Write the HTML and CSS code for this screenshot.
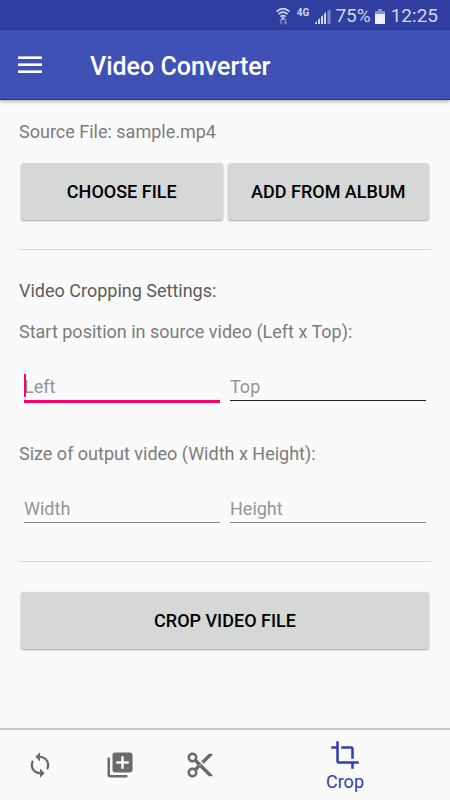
FILE: index.html
```html
<!DOCTYPE html>
<html lang="en">
<head>
<meta charset="utf-8">
<meta name="viewport" content="width=device-width, initial-scale=1">
<title>Video Converter</title>
<link rel="stylesheet" href="styles.css">
</head>
<body>
<div class="status">
  <svg width="14" height="18" viewBox="0 0 14 18" fill="none" stroke="#d3d7f2" stroke-width="1.6" aria-hidden="true">
    <path d="M.6 4.6Q7-1.4 13.4 4.6M2.5 7.2Q7 3 11.5 7.2M4.4 9.7Q7 7.4 9.6 9.7"/>
    <path d="M7 9.800l1.800 1.600L7 13l-1.800-1.600z" fill="#d3d7f2" stroke="none"/>
    <path d="M3 14l2-2.400L7 14H5.700v3.400H4.300V14zM7.400 15h1.300v-3.400h1.400V15h1.300l-2 2.400z" fill="#7d87cc" stroke="none"/>
  </svg>
  <span class="network">4G</span>
  <svg width="16" height="15" viewBox="0 0 16 15" fill="#d3d7f2" aria-hidden="true">
    <path d="M0 15v-1l2-2v3zM3 15v-4l2-2v6zM6 15V8l2-2v9zM9 15V5l2-2v12z"/>
    <path d="M12.500 15V2L15.500 0v15z" fill="#7d87cc"/>
  </svg>
  <span class="percent">75%</span>
  <svg width="10" height="15" viewBox="0 0 10 15" aria-hidden="true">
    <path d="M3 0h4v2h3v3H0V2h3z" fill="#8690d0"/>
    <path d="M0 5h10v10H0z" fill="#eef0fc"/>
  </svg>
  <span class="clock">12:25</span>
</div>
<header class="bar">
  <button class="menu" type="button" aria-label="Menu">
    <svg width="24" height="18" viewBox="0 0 24 18" fill="#fff" aria-hidden="true"><path d="M0 1h24v2H0zM0 8h24v2H0zM0 15h24v2H0z"/><path d="M0 0h24v1H0zM0 7h24v1H0zM0 14h24v1H0z" fill-opacity=".6"/></svg>
  </button>
  <h1>Video Converter</h1>
</header>
<main>
  <p class="text">Source File: sample.mp4</p>
  <div class="buttons">
    <button class="action" type="button">CHOOSE FILE</button>
    <button class="action" type="button">ADD FROM ALBUM</button>
  </div>
  <hr>
  <h2 class="text">Video Cropping Settings:</h2>
  <p class="text start" id="start">Start position in source video (Left x Top):</p>
  <div class="fields" role="group" aria-labelledby="start">
    <div class="field active">
      <input type="text" inputmode="numeric" placeholder="Left" aria-label="Left">
      <span class="caret"></span>
    </div>
    <div class="field dark"><input type="text" inputmode="numeric" placeholder="Top" aria-label="Top"></div>
  </div>
  <p class="text size" id="size">Size of output video (Width x Height):</p>
  <div class="fields" role="group" aria-labelledby="size">
    <div class="field"><input type="text" inputmode="numeric" placeholder="Width" aria-label="Width"></div>
    <div class="field"><input type="text" inputmode="numeric" placeholder="Height" aria-label="Height"></div>
  </div>
  <hr>
  <div class="buttons">
    <button class="action" type="button">CROP VIDEO FILE</button>
  </div>
</main>
<nav class="tabs">
  <a href="#convert" aria-label="Convert">
    <svg width="28" height="28" viewBox="0 0 24 24" fill="currentColor" aria-hidden="true"><path d="M12 4V1L8 5l4 4V6c3.310 0 6 2.690 6 6 0 1.010-.25 1.970-.7 2.800l1.460 1.460C19.540 15.030 20 13.570 20 12c0-4.420-3.580-8-8-8zm0 14c-3.310 0-6-2.690-6-6 0-1.010.25-1.970.7-2.800L5.240 7.740C4.460 8.970 4 10.430 4 12c0 4.420 3.580 8 8 8v3l4-4-4-4v3z"/></svg>
  </a>
  <a href="#merge" aria-label="Merge">
    <svg width="30" height="30" viewBox="0 0 24 24" fill="currentColor" aria-hidden="true"><path d="M4 6H2v14c0 1.100.9 2 2 2h14v-2H4V6zm16-4H8c-1.100 0-2 .9-2 2v12c0 1.100.9 2 2 2h12c1.100 0 2-.9 2-2V4c0-1.100-.9-2-2-2zm-1 9h-4v4h-2v-4H9V9h4V5h2v4h4v2z"/></svg>
  </a>
  <a href="#cut" aria-label="Cut">
    <svg width="30" height="30" viewBox="0 0 24 24" fill="currentColor" aria-hidden="true"><path d="M9.640 7.640c.23-.5.360-1.050.360-1.640 0-2.210-1.790-4-4-4S2 3.790 2 6s1.790 4 4 4c.59 0 1.140-.13 1.640-.36L10 12l-2.360 2.360C7.140 14.130 6.590 14 6 14c-2.210 0-4 1.790-4 4s1.790 4 4 4 4-1.790 4-4c0-.59-.13-1.140-.36-1.640L12 14l7 7h3v-1L9.640 7.640zM6 8c-1.100 0-2-.89-2-2s.9-2 2-2 2 .89 2 2-.9 2-2 2zm0 12c-1.100 0-2-.89-2-2s.9-2 2-2 2 .89 2 2-.9 2-2 2zm6-7.500c-.28 0-.5-.22-.5-.5s.22-.5.500-.5.500.22.500.5-.22.500-.5.500zM19 3l-6 6 2 2 7-7V3z"/></svg>
  </a>
  <a class="current" href="#crop" aria-current="page">
    <svg width="30" height="30" viewBox="0 0 24 24" fill="currentColor" aria-hidden="true"><path d="M17 15h2V7c0-1.100-.9-2-2-2H9v2h8v8zM7 17V1H5v4H1v2h4v10c0 1.100.9 2 2 2h10v4h2v-4h4v-2H7z"/></svg>
    <span>Crop</span>
  </a>
</nav>
</body>
</html>
```
FILE: styles.css
```css
* {
  box-sizing: border-box;
}

body {
  display: flex;
  flex-direction: column;
  min-height: 100vh;
  margin: 0;
  background: #fafafa;
  color: #7c7c7c;
  font-family: Roboto, "Liberation Sans", sans-serif;
  font-size: 18px;
  line-height: 24px;
}

button,
input {
  margin: 0;
  border: 0;
  font: inherit;
}

svg {
  display: block;
  flex: none;
}

.status {
  display: flex;
  align-items: center;
  justify-content: flex-end;
  gap: 4px;
  height: 30px;
  padding: 2px 12px 0 0;
  background: #303f9f;
  color: #d0d4f0;
  font-size: 19px;
}

.network {
  margin: -6px 2px 0 3px;
  font-size: 10px;
  font-weight: 700;
  line-height: 12px;
}

.clock {
  margin-left: 2px;
}

.bar {
  display: flex;
  align-items: center;
  height: 70px;
  padding: 0 18px;
  border-bottom: 1px solid #1d35a5;
  background: #3f51b5;
  box-shadow: 0 1px 4px rgba(0, 0, 0, 0.4);
}

.menu {
  padding: 0;
  background: none;
}

h1 {
  margin: 4px 0 0 48px;
  color: #fff;
  font-size: 25px;
  font-weight: 500;
  line-height: 32px;
}

main {
  flex: 1;
  padding: 20px 19px;
}

.text {
  margin: 0;
  font-size: 18px;
  font-weight: 400;
}

h2.text {
  color: #5c5c5c;
}

.start {
  margin-top: 17px;
}

.size {
  margin-top: 41px;
}

.buttons {
  display: flex;
  gap: 5px;
  margin: 19px 2px 0;
}

.action {
  flex: 1;
  height: 57px;
  padding: 1px 0 0;
  border-radius: 3px;
  background: #d6d8d7;
  box-shadow: 0 1px 2px rgba(0, 0, 0, 0.35);
  color: #000;
  font-weight: 500;
}

hr {
  height: 1px;
  margin: 29px 0;
  border: 0;
  background: #d5d5d5;
}

.fields {
  display: flex;
  gap: 10px;
  margin: 23px 5px 0;
}

.field {
  position: relative;
  flex: 1;
  height: 34px;
  border-bottom: 1px solid #858585;
}

.field input {
  display: block;
  width: 100%;
  height: 32px;
  padding: 7px 0 1px;
  outline: 0;
  background: none;
  color: #222;
}

.field input::placeholder {
  color: #959595;
  opacity: 1;
}

.dark {
  border-color: #222;
}

.active::after {
  content: "";
  position: absolute;
  right: 0;
  bottom: -3px;
  left: 0;
  height: 3px;
  background: #ff0068;
}

.caret {
  position: absolute;
  top: 7px;
  left: 0;
  width: 2px;
  height: 23px;
  background: #ff0068;
}

.fields + hr {
  margin: 38px 0 30px;
}

.tabs {
  display: flex;
  height: 72px;
  border-top: 2px solid #c8c8c8;
}

.tabs a {
  display: flex;
  flex: 0 0 80px;
  flex-direction: column;
  align-items: center;
  justify-content: center;
  color: #6b6b6b;
  text-decoration: none;
}

.tabs .current {
  flex: 1;
  padding-top: 3px;
  color: #303fb0;
}
```
